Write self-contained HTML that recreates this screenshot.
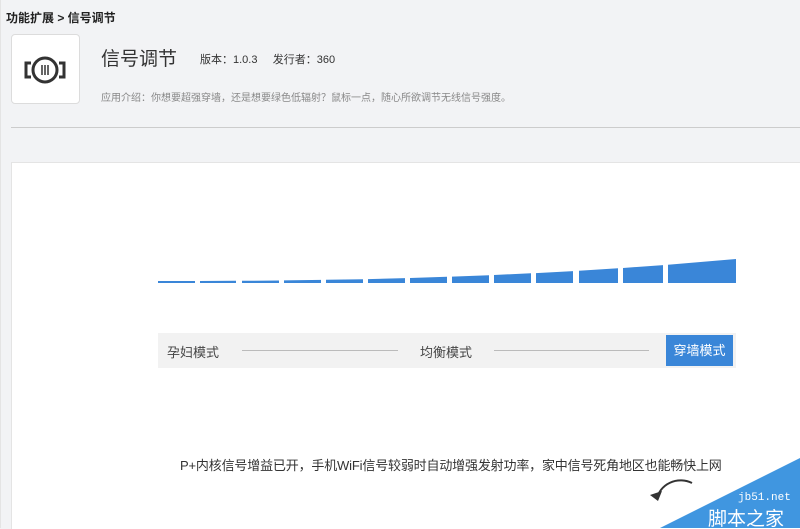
<!DOCTYPE html>
<html><head><meta charset="utf-8">
<style>
body{margin:0;width:800px;height:528px;overflow:hidden;background:#f2f3f5;font-family:"Liberation Sans","Noto Sans CJK SC",sans-serif;position:relative}
.a{position:absolute;white-space:nowrap}
</style></head><body>
<div class="a" style="left:6px;top:9px;font-size:12px;color:#222;font-weight:bold">功能扩展 &gt; 信号调节</div>
<div class="a" style="left:11px;top:34px;width:67px;height:68px;background:#fff;border:1px solid #dcdcdc;border-radius:4px"></div>
<svg class="a" style="left:11px;top:34px" width="69" height="70" viewBox="11 34 69 70">
<circle cx="45" cy="70" r="12" fill="none" stroke="#333" stroke-width="3"/>
<path d="M31 63h-5v14h5M59 63h5v14h-5" fill="none" stroke="#333" stroke-width="3"/>
<path d="M42 65v10M45 65v10M48 65v10" stroke="#333" stroke-width="1.5"/>
</svg>
<div class="a" style="left:101px;top:44px;font-size:19px;color:#333">信号调节</div>
<div class="a" style="left:200px;top:51px;font-size:11px;color:#333">版本：1.0.3 &nbsp;&nbsp;&nbsp; 发行者：360</div>
<div class="a" style="left:101px;top:89px;font-size:10px;color:#888">应用介绍：你想要超强穿墙，还是想要绿色低辐射？鼠标一点，随心所欲调节无线信号强度。</div>
<div class="a" style="left:11px;top:127px;width:789px;height:1px;background:#ccc"></div>
<div class="a" style="left:0;top:0;width:1px;height:528px;background:#e4e4e4"></div>
<div class="a" style="left:11px;top:162px;width:789px;height:366px;background:#fff;border-top:1px solid #e4e4e4;border-left:1px solid #e4e4e4"></div>
<svg class="a" style="left:0;top:0" width="800" height="300">
<g fill="#3a86d8">
<polygon points="158,283 158,281 195,281 195,283"/>
<polygon points="200,283 200,281 236,280.8 236,283"/>
<polygon points="242,283 242,280.8 279,280.5 279,283"/>
<polygon points="284,283 284,280.4 321,279.9 321,283"/>
<polygon points="326,283 326,279.8 363,279.2 363,283"/>
<polygon points="368,283 368,279.1 405,278.1 405,283"/>
<polygon points="410,283 410,278 447,276.8 447,283"/>
<polygon points="452,283 452,276.6 489,275.2 489,283"/>
<polygon points="494,283 494,275 531,273.3 531,283"/>
<polygon points="536,283 536,273.1 573,271.1 573,283"/>
<polygon points="579,283 579,270.7 618,268.3 618,283"/>
<polygon points="623,283 623,268 663,265.1 663,283"/>
<polygon points="668,283 668,264.7 736,259 736,283"/>
</g></svg>
<div class="a" style="left:158px;top:333px;width:578px;height:35px;background:#f2f2f2"></div>
<div class="a" style="left:167px;top:342px;font-size:13px;color:#444">孕妇模式</div>
<div class="a" style="left:242px;top:350px;width:156px;height:1px;background:#bbb"></div>
<div class="a" style="left:420px;top:342px;font-size:13px;color:#444">均衡模式</div>
<div class="a" style="left:494px;top:350px;width:155px;height:1px;background:#bbb"></div>
<div class="a" style="left:666px;top:335px;width:67px;height:31px;background:#3a86d8;color:#fff;font-size:13px;line-height:31px;text-align:center">穿墙模式</div>
<div class="a" style="left:180px;top:455px;font-size:13px;color:#333;letter-spacing:-0.17px">P+内核信号增益已开，手机WiFi信号较弱时自动增强发射功率，家中信号死角地区也能畅快上网</div>
<svg class="a" style="left:640px;top:455px" width="160" height="73">
<polygon points="160,3 160,73 20,73" fill="#4096e0"/>
<path d="M17 44 A24 22 0 0 1 52 28" fill="none" stroke="#333" stroke-width="2"/>
<polygon points="10,40 22,36 18,46" fill="#333"/>
<text x="98" y="45" font-size="11" fill="#fff" font-family="Liberation Mono,monospace">jb51.net</text>
<text x="68" y="70" font-size="19" fill="#fff" font-family="Noto Sans CJK SC,sans-serif">脚本之家</text>
</svg>
</body></html>
